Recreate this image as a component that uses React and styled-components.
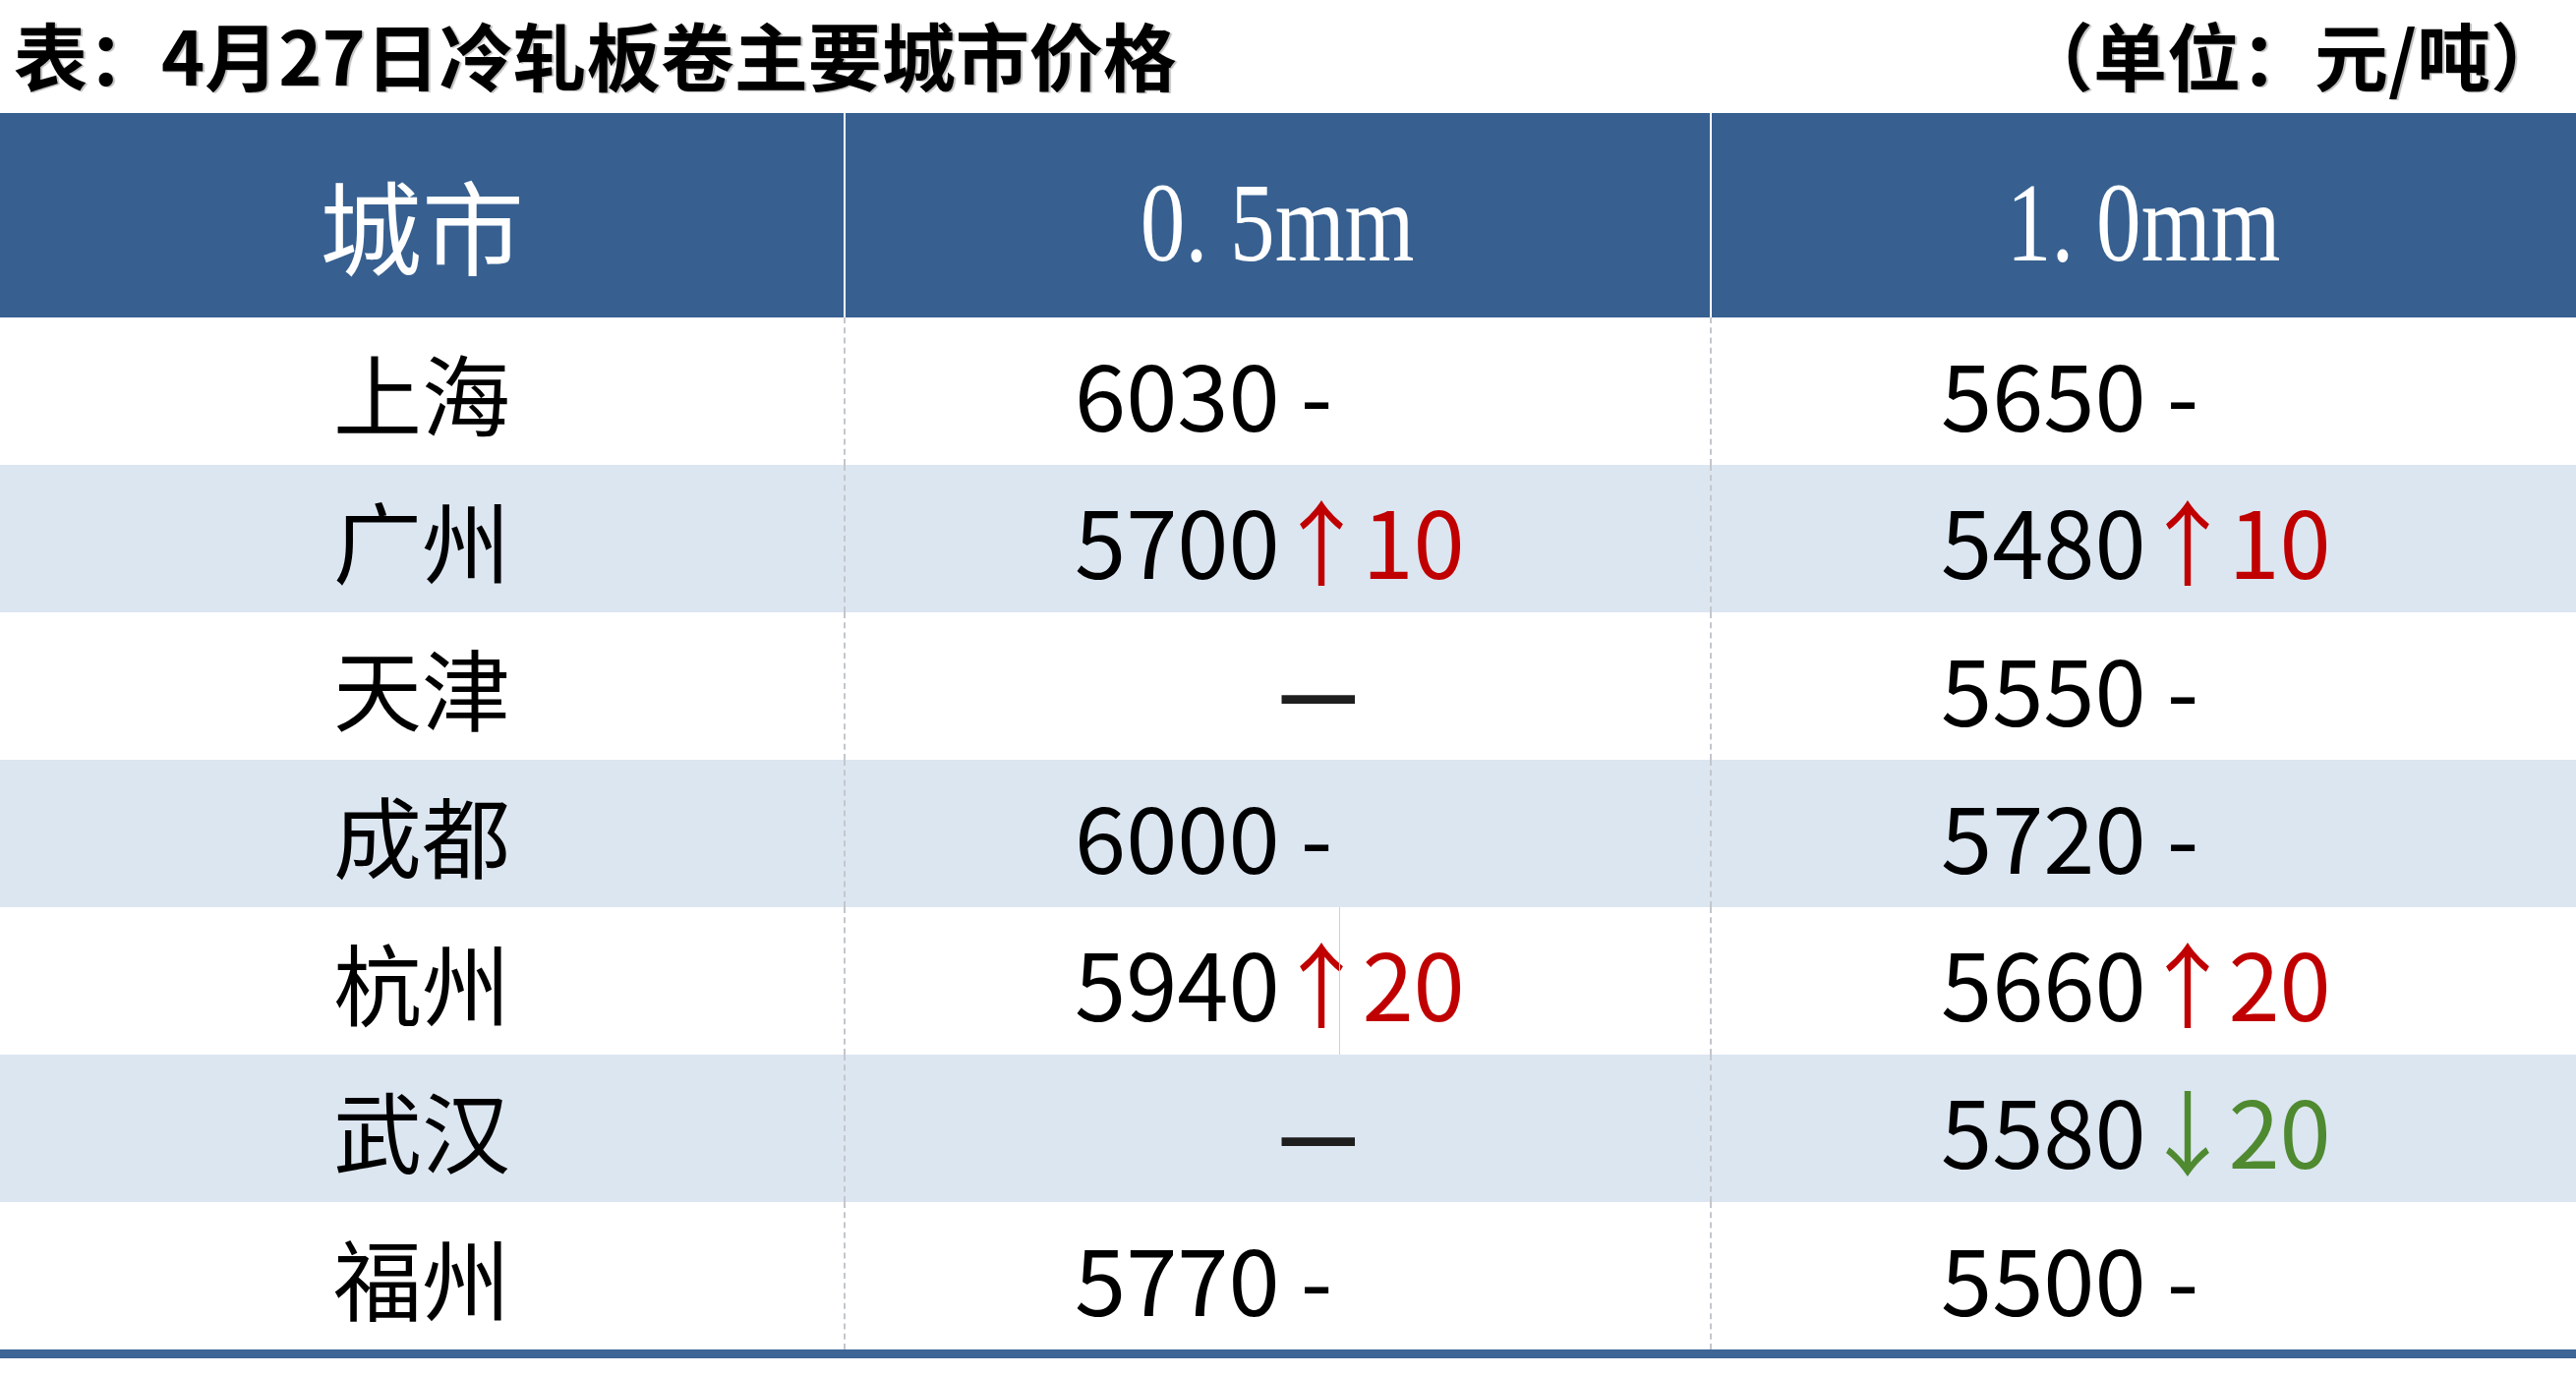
import React from 'react';
import styled, { createGlobalStyle } from 'styled-components';

const GlobalStyle = createGlobalStyle`
  html, body {
    margin: 0;
    padding: 0;
    background: #fff;
  }
  body {
    font-family: "Noto Sans CJK SC", "Noto Sans", sans-serif;
  }
`;

const rows = [
  { city: '上海', thin: { v: '6030', t: 'flat' }, thick: { v: '5650', t: 'flat' } },
  { city: '广州', thin: { v: '5700', t: 'up', d: '10' }, thick: { v: '5480', t: 'up', d: '10' } },
  { city: '天津', thin: null, thick: { v: '5550', t: 'flat' } },
  { city: '成都', thin: { v: '6000', t: 'flat' }, thick: { v: '5720', t: 'flat' } },
  { city: '杭州', thin: { v: '5940', t: 'up', d: '20', seam: 502 }, thick: { v: '5660', t: 'up', d: '20' } },
  { city: '武汉', thin: null, thick: { v: '5580', t: 'down', d: '20' } },
  { city: '福州', thin: { v: '5770', t: 'flat' }, thick: { v: '5500', t: 'flat' } },
];

const Page = styled.div`
  width: 2620px;
  height: 1400px;
  background: #fff;
  overflow: hidden;
`;

const Caption = styled.div`
  height: 115px;
  display: flex;
  align-items: center;
  justify-content: space-between;
  padding: 0 12px 6px 14px;
  box-sizing: border-box;
  font-size: 75px;
  font-weight: 700;
  color: #000;
  text-shadow: 2px 1px 1px rgba(0, 0, 0, 0.25);
`;

const Table = styled.div`
  display: grid;
  grid-template-columns: 858px 881px 881px;
  border-bottom: 9px solid #3d6595;
`;

const HeadCell = styled.div`
  height: 208px;
  box-sizing: border-box;
  background: #376091;
  color: #fff;
  display: flex;
  align-items: center;
  justify-content: center;
  padding-top: 16px;
  border-left: ${(p) => (p.$first ? 'none' : '2px solid #fff')};
  font-size: 104px;
  font-weight: 400;
`;

const Mm = styled.span`
  font-family: "Liberation Serif", serif;
  font-size: 114px;
  display: inline-block;
  transform: scaleX(0.8);
`;

const Cell = styled.div`
  position: relative;
  height: 150px;
  box-sizing: border-box;
  background: ${(p) => (p.$striped ? '#dce6f1' : '#fff')};
  border-left: ${(p) => (p.$first ? 'none' : '2px dashed #c3c7cc')};
  display: flex;
  align-items: center;
  justify-content: ${(p) => (p.$first ? 'center' : 'flex-start')};
  padding-left: ${(p) => (p.$first ? '0' : '233px')};
  color: #000;
  font-size: ${(p) => (p.$first ? '90px' : '94px')};
  line-height: 1;

  &::after {
    content: '';
    display: ${(p) => (p.$seam ? 'block' : 'none')};
    position: absolute;
    top: 0;
    bottom: 0;
    left: ${(p) => p.$seam || 0}px;
    width: 1px;
    background: #d2d2d2;
  }
`;

const Change = styled.span`
  color: ${(p) => (p.$t === 'up' ? '#c00000' : p.$t === 'down' ? '#4f8a30' : '#000')};
  white-space: pre;
`;

const Arrow = styled.span`
  margin: 0 -0.06em 0 -0.05em;
`;

const Missing = styled.span`
  margin-left: 206px;
  font-size: 92px;
  font-weight: 700;
  color: #1e1e1e;
`;

function Value({ data }) {
  if (!data) return <Missing>—</Missing>;
  if (data.t === 'flat') {
    return (
      <span>
        {data.v}
        <Change $t="flat"> -</Change>
      </span>
    );
  }
  return (
    <span>
      {data.v}
      <Change $t={data.t}>
        <Arrow>{data.t === 'up' ? '↑' : '↓'}</Arrow>
        {data.d}
      </Change>
    </span>
  );
}

export default function App() {
  return (
    <Page>
      <GlobalStyle />
      <Caption>
        <span>表：4月27日冷轧板卷主要城市价格</span>
        <span>（单位：元/吨）</span>
      </Caption>
      <Table>
        <HeadCell $first>城市</HeadCell>
        <HeadCell>
          <Mm>0. 5mm</Mm>
        </HeadCell>
        <HeadCell>
          <Mm>1. 0mm</Mm>
        </HeadCell>
        {rows.map((row, i) => (
          <React.Fragment key={row.city}>
            <Cell $first $striped={i % 2 === 1}>
              {row.city}
            </Cell>
            <Cell $striped={i % 2 === 1} $seam={row.thin && row.thin.seam}>
              <Value data={row.thin} />
            </Cell>
            <Cell $striped={i % 2 === 1}>
              <Value data={row.thick} />
            </Cell>
          </React.Fragment>
        ))}
      </Table>
    </Page>
  );
}
